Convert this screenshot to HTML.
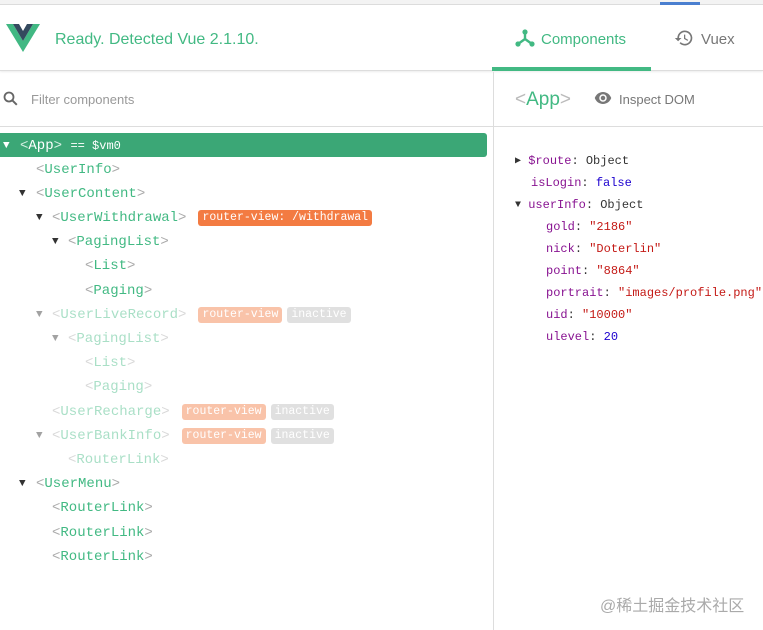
<!DOCTYPE html>
<html><head><meta charset="utf-8"><style>
*{margin:0;padding:0;box-sizing:border-box}
body{width:763px;height:630px;overflow:hidden;background:#fff;font-family:"Liberation Sans",sans-serif;position:relative}
.abs{position:absolute}
.row{position:absolute;left:0;height:22px;line-height:22px;font-family:"Liberation Mono",monospace;font-size:14px;color:#42b983;white-space:nowrap}
.row .b{color:#aaa}
.arr{position:absolute;font-size:11px;color:#333}
.fade{opacity:.45}
.badge{display:inline-block;font-size:11.5px;line-height:16px;height:16px;padding:0 4px;border-radius:3px;color:#fff;vertical-align:1px;margin-left:12px;font-family:"Liberation Mono",monospace}
.rv{background:#f37b42}
.in{background:#bbb;margin-left:5px}
.p{position:absolute;font-family:"Liberation Mono",monospace;font-size:12px;line-height:16px;color:#333;white-space:nowrap}
.k{color:#881391}.s{color:#c41a16}.n{color:#1c00cf}
</style></head><body>
<div class="abs" style="left:0;top:0;width:763px;height:5px;background:#f3f3f3;border-bottom:1px solid #ddd"></div>
<div class="abs" style="left:660px;top:2px;width:40px;height:3px;background:#4a7fd0"></div>
<div class="abs" style="left:0;top:5px;width:763px;height:66px;border-bottom:1px solid #ddd;box-shadow:0 1px 2px rgba(0,0,0,.08)"></div>
<svg class="abs" style="left:6px;top:24px" width="34" height="28" viewBox="0 0 34 28"><path d="M0 0h7l10 17L27 0h7L17 28z" fill="#41b883"/><path d="M7 0h6l4 7 4-7h6L17 17z" fill="#34495e"/></svg>
<div class="abs" style="left:55px;top:31px;font-size:16px;color:#42b983">Ready. Detected Vue 2.1.10.</div>
<svg class="abs" style="left:515px;top:29px" width="20" height="18" viewBox="0 0 20 18"><circle cx="10" cy="3" r="2.6" fill="#42b983"/><circle cx="3" cy="15" r="2.6" fill="#42b983"/><circle cx="17" cy="15" r="2.6" fill="#42b983"/><path d="M10 3v7M10 10L3 15M10 10l7 5" stroke="#42b983" stroke-width="2.4" fill="none"/></svg>
<div class="abs" style="left:541px;top:31px;font-size:15px;color:#42b983">Components</div>
<div class="abs" style="left:492px;top:67px;width:159px;height:4px;background:#42b983"></div>
<svg class="abs" style="left:674px;top:28px" width="20" height="20" viewBox="0 0 24 24"><path d="M13 3a9 9 0 0 0-9 9H1l3.9 3.9L9 12H6a7 7 0 1 1 2.05 4.95l-1.42 1.42A9 9 0 1 0 13 3zm-1 5v5l4.25 2.52.77-1.28-3.52-2.09V8z" fill="#777"/></svg>
<div class="abs" style="left:701px;top:31px;font-size:15px;color:#777">Vuex</div>
<div class="abs" style="left:0;top:126px;width:763px;height:1px;background:#ddd"></div>
<div class="abs" style="left:493px;top:72px;width:1px;height:558px;background:#ddd"></div>
<svg class="abs" style="left:3px;top:91px" width="15" height="15" viewBox="0 0 15 15"><circle cx="6" cy="6" r="4.5" stroke="#666" stroke-width="1.8" fill="none"/><path d="M9.3 9.3l4.5 4.5" stroke="#666" stroke-width="2"/></svg>
<div class="abs" style="left:31px;top:92px;font-size:13px;color:#999">Filter components</div>
<div class="abs" style="left:515px;top:89px;font-size:19px;color:#42b983"><span style="color:#bbb">&lt;</span>App<span style="color:#bbb">&gt;</span></div>
<svg class="abs" style="left:594px;top:92px" width="18" height="12" viewBox="0 0 24 16"><path d="M12 0C7 0 2.7 3.3 1 8c1.7 4.7 6 8 11 8s9.3-3.3 11-8C21.3 3.3 17 0 12 0zm0 13a5 5 0 1 1 0-10 5 5 0 0 1 0 10zm0-8a3 3 0 1 0 0 6 3 3 0 0 0 0-6z" fill="#777"/></svg>
<div class="abs" style="left:619px;top:92px;font-size:13px;color:#777">Inspect DOM</div>
<div class="abs" style="left:0;top:133px;width:487px;height:24px;background:#3ba776;border-radius:0 3px 3px 0"></div>
<div class="row" style="top:135px;color:#fff"><span class="arr" style="left:3px;color:#fff">▼</span><span style="position:absolute;left:20px"><span style="color:#d6f0e3">&lt;</span>App<span style="color:#d6f0e3">&gt;</span> <span style="font-size:12px">== $vm0</span></span></div>
<div class="row" style="top:159px"><span style="position:absolute;left:36px"><span class="b">&lt;</span>UserInfo<span class="b">&gt;</span></span></div>
<div class="row" style="top:183px"><span class="arr" style="left:19px">▼</span><span style="position:absolute;left:36px"><span class="b">&lt;</span>UserContent<span class="b">&gt;</span></span></div>
<div class="row" style="top:207px"><span class="arr" style="left:36px">▼</span><span style="position:absolute;left:52px"><span class="b">&lt;</span>UserWithdrawal<span class="b">&gt;</span><span class="badge rv">router-view: /withdrawal</span></span></div>
<div class="row" style="top:231px"><span class="arr" style="left:52px">▼</span><span style="position:absolute;left:68px"><span class="b">&lt;</span>PagingList<span class="b">&gt;</span></span></div>
<div class="row" style="top:255px"><span style="position:absolute;left:85px"><span class="b">&lt;</span>List<span class="b">&gt;</span></span></div>
<div class="row" style="top:280px"><span style="position:absolute;left:85px"><span class="b">&lt;</span>Paging<span class="b">&gt;</span></span></div>
<div class="row fade" style="top:304px"><span class="arr" style="left:36px">▼</span><span style="position:absolute;left:52px"><span class="b">&lt;</span>UserLiveRecord<span class="b">&gt;</span><span class="badge rv">router-view</span><span class="badge in">inactive</span></span></div>
<div class="row fade" style="top:328px"><span class="arr" style="left:52px">▼</span><span style="position:absolute;left:68px"><span class="b">&lt;</span>PagingList<span class="b">&gt;</span></span></div>
<div class="row fade" style="top:352px"><span style="position:absolute;left:85px"><span class="b">&lt;</span>List<span class="b">&gt;</span></span></div>
<div class="row fade" style="top:376px"><span style="position:absolute;left:85px"><span class="b">&lt;</span>Paging<span class="b">&gt;</span></span></div>
<div class="row fade" style="top:401px"><span style="position:absolute;left:52px"><span class="b">&lt;</span>UserRecharge<span class="b">&gt;</span><span class="badge rv">router-view</span><span class="badge in">inactive</span></span></div>
<div class="row fade" style="top:425px"><span class="arr" style="left:36px">▼</span><span style="position:absolute;left:52px"><span class="b">&lt;</span>UserBankInfo<span class="b">&gt;</span><span class="badge rv">router-view</span><span class="badge in">inactive</span></span></div>
<div class="row fade" style="top:449px"><span style="position:absolute;left:68px"><span class="b">&lt;</span>RouterLink<span class="b">&gt;</span></span></div>
<div class="row" style="top:473px"><span class="arr" style="left:19px">▼</span><span style="position:absolute;left:36px"><span class="b">&lt;</span>UserMenu<span class="b">&gt;</span></span></div>
<div class="row" style="top:497px"><span style="position:absolute;left:52px"><span class="b">&lt;</span>RouterLink<span class="b">&gt;</span></span></div>
<div class="row" style="top:522px"><span style="position:absolute;left:52px"><span class="b">&lt;</span>RouterLink<span class="b">&gt;</span></span></div>
<div class="row" style="top:546px"><span style="position:absolute;left:52px"><span class="b">&lt;</span>RouterLink<span class="b">&gt;</span></span></div>
<div class="p" style="left:515px;top:153px"><span style="font-size:10px;position:relative;top:-1px">▶</span> <span class="k">$route</span>: Object</div>
<div class="p" style="left:531px;top:175px"><span class="k">isLogin</span>: <span class="n">false</span></div>
<div class="p" style="left:515px;top:197px"><span style="font-size:10px;position:relative;top:-1px">▼</span> <span class="k">userInfo</span>: Object</div>
<div class="p" style="left:546px;top:219px"><span class="k">gold</span>: <span class="s">"2186"</span></div>
<div class="p" style="left:546px;top:241px"><span class="k">nick</span>: <span class="s">"Doterlin"</span></div>
<div class="p" style="left:546px;top:263px"><span class="k">point</span>: <span class="s">"8864"</span></div>
<div class="p" style="left:546px;top:285px"><span class="k">portrait</span>: <span class="s">"images/profile.png"</span></div>
<div class="p" style="left:546px;top:307px"><span class="k">uid</span>: <span class="s">"10000"</span></div>
<div class="p" style="left:546px;top:329px"><span class="k">ulevel</span>: <span class="n">20</span></div>
<div class="abs" style="left:600px;top:592px;font-size:16px;color:#aaa;font-family:'Liberation Sans','Noto Sans CJK SC',sans-serif">@稀土掘金技术社区</div>
</body></html>
